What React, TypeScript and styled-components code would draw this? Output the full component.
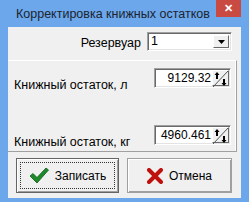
import React from 'react';
import styled, { createGlobalStyle } from 'styled-components';

const Global = createGlobalStyle`
  html, body { margin: 0; padding: 0; background: #6ba7ea; }
  body { font-family: "Liberation Sans", Arial, sans-serif; }
`;

const Frame = styled.div`
  width: 249px;
  height: 202px;
  box-sizing: border-box;
  background: #6ba7ea;
  padding: 0 8px 4px 8px;
  display: flex;
  flex-direction: column;
`;

const TitleBar = styled.div`
  height: 27px;
  display: flex;
  align-items: flex-start;
  justify-content: space-between;
`;

const Title = styled.div`
  margin-top: 7px;
  margin-left: 8px;
  font-size: 12.5px;
  white-space: nowrap;
  color: #1b2430;
`;

const CloseBtn = styled.div`
  width: 25px;
  height: 17px;
  flex-shrink: 0;
  background: #c94a42;
  color: #fff;
  font-size: 11px;
  font-weight: bold;
  display: flex;
  align-items: center;
  justify-content: center;
`;

const Client = styled.div`
  flex: 1;
  background: #f0f0f0;
  display: flex;
  flex-direction: column;
  font-size: 12.5px;
  color: #000;
`;

const TopRow = styled.div`
  height: 33px;
  box-sizing: border-box;
  padding-top: 5px;
  display: flex;
  justify-content: flex-end;
  padding-right: 9px;
  gap: 6px;
`;

const Label = styled.span`
  line-height: 19px;
  padding-top: 2px;
`;

const Sunken = styled.div<{ $w: number; $h: number }>`
  width: ${p => p.$w}px;
  height: ${p => p.$h}px;
  box-sizing: border-box;
  background: #fff;
  border-top: 1px solid #a0a0a0;
  border-left: 1px solid #a0a0a0;
  border-right: 1px solid #fff;
  border-bottom: 1px solid #fff;
  box-shadow: inset 1px 1px 0 #696969, inset -1px -1px 0 #e3e3e3;
  display: flex;
  align-items: stretch;
  flex-shrink: 0;
`;

const ComboText = styled.div`
  flex: 1;
  padding-left: 3px;
  line-height: 16px;
`;

const Raised = styled.div<{ $w: number }>`
  width: ${p => p.$w}px;
  margin: 2px 2px 2px 0;
  box-sizing: border-box;
  background: #f0f0f0;
  border-top: 1px solid #fff;
  border-left: 1px solid #fff;
  border-right: 1px solid #696969;
  border-bottom: 1px solid #696969;
  display: flex;
  align-items: center;
  justify-content: center;
`;

const Panel = styled.div`
  height: 92px;
  margin-right: 4px;
  box-sizing: border-box;
  border-top: 1px solid #fff;
  border-right: 1px solid #a0a0a0;
  box-shadow: inset -1px 0 0 #fff;
  border-bottom: 1px solid #a0a0a0;
  display: flex;
  flex-direction: column;
  padding: 7px 5px 0 6px;
  gap: 37px;
`;

const FieldRow = styled.div`
  display: flex;
  justify-content: space-between;
  align-items: flex-end;
  height: 20px;
`;

const FieldLabel = styled.span`
  position: relative;
  top: 4px;
`;

const NumText = styled.div`
  flex: 1;
  text-align: right;
  padding-right: 1px;
  line-height: 18px;
  font-size: 12px;
`;

const Spin = styled.div`
  width: 17px;
  margin: 1px 1px 1px 0;
  box-sizing: border-box;
  background: #f0f0f0;
  border-top: 1px solid #fff;
  border-left: 1px solid #fff;
  border-right: 1px solid #696969;
  border-bottom: 1px solid #696969;
  display: flex;
`;

const ButtonRow = styled.div`
  flex: 1;
  display: flex;
  align-items: flex-start;
  padding: 6px 0 0 8px;
  gap: 8px;
`;

const Button = styled.div<{ $default?: boolean }>`
  width: ${p => (p.$default ? 103 : 105)}px;
  height: 35px;
  box-sizing: border-box;
  background: #f0f0f0;
  border: 1px solid ${p => (p.$default ? '#646464' : '#a0a0a0')};
  box-shadow: inset 1px 1px 0 #fff, inset -1px -1px 0 #a0a0a0;
  display: flex;
  align-items: center;
  justify-content: center;
  gap: 6px;
  font-size: 12px;
  position: relative;
`;

const Focus = styled.div`
  position: absolute;
  inset: 3px;
  border: 1px dotted #333;
`;

function SpinIcon() {
  return (
    <svg width="15" height="16" viewBox="0 0 15 16">
      <line x1="0" y1="16" x2="15" y2="0" stroke="#555" strokeWidth="1" />
      <path d="M4 1 L6.5 4 L5 4 L5 8 L3 8 L3 4 L1.5 4 Z" fill="#000" />
      <path d="M11 15 L8.5 12 L10 12 L10 8 L12 8 L12 12 L13.5 12 Z" fill="#000" />
    </svg>
  );
}

function NumField({ value }: { value: string }) {
  return (
    <Sunken $w={77} $h={20}>
      <NumText>{value}</NumText>
      <Spin>
        <SpinIcon />
      </Spin>
    </Sunken>
  );
}

export default function App() {
  return (
    <>
      <Global />
      <Frame>
        <TitleBar>
          <Title>Корректировка книжных остатков</Title>
          <CloseBtn>✕</CloseBtn>
        </TitleBar>
        <Client>
          <TopRow>
            <Label>Резервуар</Label>
            <Sunken $w={85} $h={19}>
              <ComboText>1</ComboText>
              <Raised $w={16}>
                <svg width="7" height="4" viewBox="0 0 7 4">
                  <path d="M0 0 L7 0 L3.5 4 Z" fill="#000" />
                </svg>
              </Raised>
            </Sunken>
          </TopRow>
          <Panel>
            <FieldRow>
              <FieldLabel>Книжный остаток, л</FieldLabel>
              <NumField value="9129.32" />
            </FieldRow>
            <FieldRow>
              <FieldLabel>Книжный остаток, кг</FieldLabel>
              <NumField value="4960.461" />
            </FieldRow>
          </Panel>
          <ButtonRow>
            <Button $default>
              <Focus />
              <svg width="20" height="17" viewBox="0 0 20 17">
                <path d="M1 9 L4 6.5 L8 10.5 L17 1 L19.5 3 L8 16 Z" fill="#1f8a2a" stroke="#0f5a18" strokeWidth="0.8" />
              </svg>
              <span>Записать</span>
            </Button>
            <Button>
              <svg width="16" height="16" viewBox="0 0 16 16">
                <path d="M2 2 L14 14 M14 2 L2 14" stroke="#c0100c" strokeWidth="4" strokeLinecap="round" />
              </svg>
              <span>Отмена</span>
            </Button>
          </ButtonRow>
        </Client>
      </Frame>
    </>
  );
}
